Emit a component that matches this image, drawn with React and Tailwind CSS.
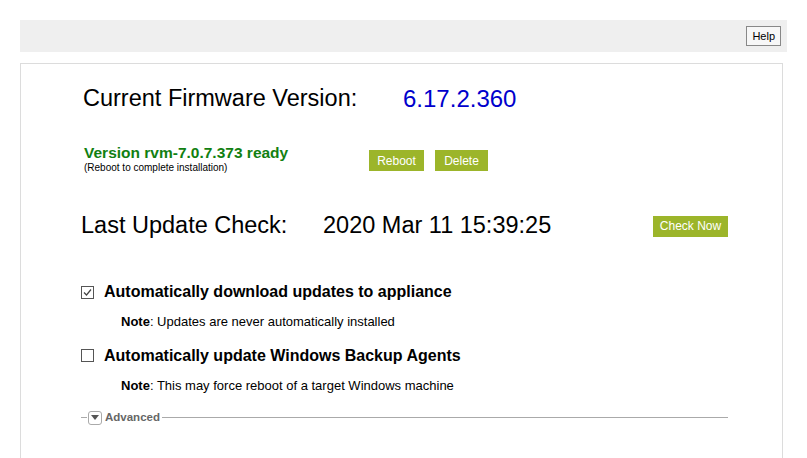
import React from "react";

export default function App() {
  const f = { fontFamily: '"Liberation Sans", Arial, sans-serif' };
  return (
    <div className="w-[807px] h-[458px] bg-white overflow-hidden pt-[20px] px-[20px] text-black" style={f}>
      <div className="h-[32px] bg-[#efefef] flex items-center justify-end pr-[6px]">
        <button className="h-[20px] px-[5px] border border-[#888] bg-[#f7f7f7] text-[11px] leading-none">Help</button>
      </div>
      <div className="mt-[11px] w-[763px] h-[400px] border border-[#dcdcdc] pl-[60px] pr-[54px]">
        <div className="mt-[21px] flex items-center text-[23.5px] h-[28px]">
          <span className="ml-[2px] w-[320px]">Current Firmware Version:</span>
          <span className="text-[#0000cc] text-[24px]">6.17.2.360</span>
        </div>
        <div className="mt-[31px] flex items-start">
          <div className="ml-[3px] w-[285px]">
            <div className="text-[15.5px] font-bold text-[#118011] leading-[18px]">Version rvm-7.0.7.373 ready</div>
            <div className="text-[10px] leading-[12px]">(Reboot to complete installation)</div>
          </div>
          <div className="flex gap-[11px] mt-[6px]">
            <button className="w-[55px] h-[21px] bg-[#9cb52a] text-white text-[12px]">Reboot</button>
            <button className="w-[53px] h-[21px] bg-[#9cb52a] text-white text-[12px]">Delete</button>
          </div>
        </div>
        <div className="mt-[38px] flex items-center h-[28px]">
          <span className="text-[23.5px] w-[242px]">Last Update Check:</span>
          <span className="text-[23.5px] flex-1">2020 Mar 11 15:39:25</span>
          <button className="w-[75px] h-[21px] bg-[#9cb52a] text-white text-[12px]">Check Now</button>
        </div>
        <div className="mt-[40px] flex items-center gap-[10px]">
          <span className="w-[13px] h-[13px] border border-[#555] flex items-center justify-center">
            <svg width="11" height="11" viewBox="0 0 11 11"><path d="M2 5.5 L4.5 8 L9 2.5" fill="none" stroke="#444" strokeWidth="1.2" /></svg>
          </span>
          <span className="text-[16px] font-bold">Automatically download updates to appliance</span>
        </div>
        <div className="mt-[8px] ml-[40px] text-[13px]"><b>Note</b>: Updates are never automatically installed</div>
        <div className="mt-[12px] flex items-center gap-[10px]">
          <span className="w-[13px] h-[13px] border border-[#555]" />
          <span className="text-[16px] font-bold">Automatically update Windows Backup Agents</span>
        </div>
        <div className="mt-[8px] ml-[40px] text-[13px]"><b>Note</b>: This may force reboot of a target Windows machine</div>
        <div className="mt-[14px] flex items-center">
          <span className="w-[6px] h-px bg-[#aaa]" />
          <span className="mx-[1px] w-[14px] h-[14px] border border-[#aaa] rounded-[3px] flex items-center justify-center">
            <svg width="8" height="5" viewBox="0 0 8 5"><path d="M0 0 L8 0 L4 5Z" fill="#555" /></svg>
          </span>
          <span className="text-[11.5px] font-bold text-[#666] px-[2px]">Advanced</span>
          <span className="flex-1 h-px bg-[#aaa]" />
        </div>
      </div>
    </div>
  );
}
